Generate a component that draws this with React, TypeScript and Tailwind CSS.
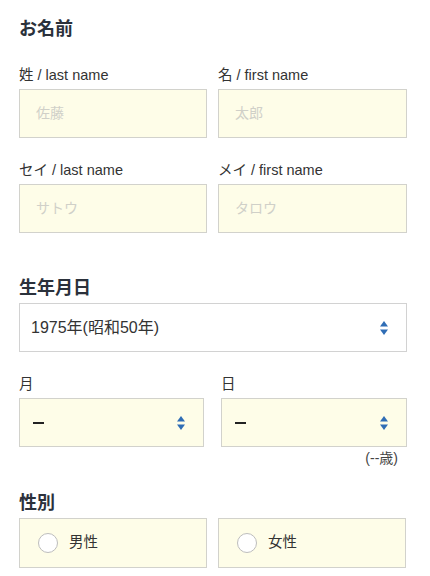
const font = "font-['Liberation_Sans','Noto_Sans_CJK_JP',sans-serif]";

function SortArrows() {
  return (
    <svg width="10" height="16" viewBox="0 0 10 16" className="shrink-0">
      <path d="M5 1 L9 6.5 L1 6.5 Z" fill="#2f6db5" />
      <path d="M1 9.5 L9 9.5 L5 15 Z" fill="#2f6db5" />
    </svg>
  );
}

function TextField({ label, placeholder }: { label: string; placeholder: string }) {
  return (
    <div className="flex flex-col">
      <label className="h-[20px] text-[14.5px] leading-[20px] text-[#333]">{label}</label>
      <div className="mt-[4px] flex h-[49px] items-center border border-[#d2d2cc] bg-[#fefde8] px-[16px] text-[14px] text-[#d0d0c8]">
        {placeholder}
      </div>
    </div>
  );
}

function SelectBox({ value, tinted }: { value: string; tinted?: boolean }) {
  return (
    <div
      className={
        tinted
          ? "flex h-[49px] items-center justify-between border border-[#d2d2cc] bg-[#fefde8] pl-[12px] pr-[17px] text-[16px] text-[#222]"
          : "flex h-[49px] items-center justify-between border border-[#d2d2d2] bg-white pl-[11px] pr-[17px] text-[16px] text-[#333]"
      }
    >
      <span>{value}</span>
      <SortArrows />
    </div>
  );
}

function Dash() {
  return <span className="my-auto block h-[2px] w-[11px] bg-[#222]" aria-label="—" />;
}

function Radio({ label }: { label: string }) {
  return (
    <div className="flex h-[50px] items-center border border-[#d2d2cc] bg-[#fefde8] pl-[18px]">
      <span className="h-[20px] w-[20px] rounded-full border border-[#bdbdbd] bg-white" />
      <span className="ml-[11px] text-[14.5px] text-[#333]">{label}</span>
    </div>
  );
}

export default function App() {
  return (
    <div className={`min-h-[576px] bg-white pl-[19px] pr-[23px] pt-[15px] ${font}`}>
      <h2 className="h-[28px] text-[18px] font-bold leading-[28px] text-[#2b313b]">お名前</h2>

      <div className="mt-[22px] grid grid-cols-[188px_189px] gap-x-[11px]">
        <TextField label="姓 / last name" placeholder="佐藤" />
        <TextField label="名 / first name" placeholder="太郎" />
      </div>
      <div className="mt-[22px] grid grid-cols-[188px_189px] gap-x-[11px]">
        <TextField label="セイ / last name" placeholder="サトウ" />
        <TextField label="メイ / first name" placeholder="タロウ" />
      </div>

      <h2 className="mt-[41px] h-[28px] text-[18px] font-bold leading-[28px] text-[#2b313b]">生年月日</h2>
      <div className="mt-[1px]">
        <SelectBox value="1975年(昭和50年)" />
      </div>

      <div className="mt-[22px] grid grid-cols-[185px_186px] gap-x-[17px]">
        <div className="flex flex-col">
          <label className="h-[20px] text-[14.5px] leading-[20px] text-[#333]">月</label>
          <div className="mt-[4px] flex h-[49px] items-center justify-between border border-[#d2d2cc] bg-[#fefde8] pl-[13px] pr-[17px]">
            <Dash />
            <SortArrows />
          </div>
        </div>
        <div className="flex flex-col">
          <label className="h-[20px] text-[14.5px] leading-[20px] text-[#333]">日</label>
          <div className="mt-[4px] flex h-[49px] items-center justify-between border border-[#d2d2cc] bg-[#fefde8] pl-[13px] pr-[17px]">
            <Dash />
            <SortArrows />
          </div>
        </div>
      </div>
      <p className="mt-[2px] h-[18px] pr-[9px] text-right text-[14px] leading-[18px] text-[#444]">(--歳)</p>

      <h2 className="mt-[22px] h-[28px] text-[18px] font-bold leading-[28px] text-[#2b313b]">性別</h2>
      <div className="mt-[1px] grid grid-cols-[188px_188px] gap-x-[11px]">
        <Radio label="男性" />
        <Radio label="女性" />
      </div>
    </div>
  );
}
